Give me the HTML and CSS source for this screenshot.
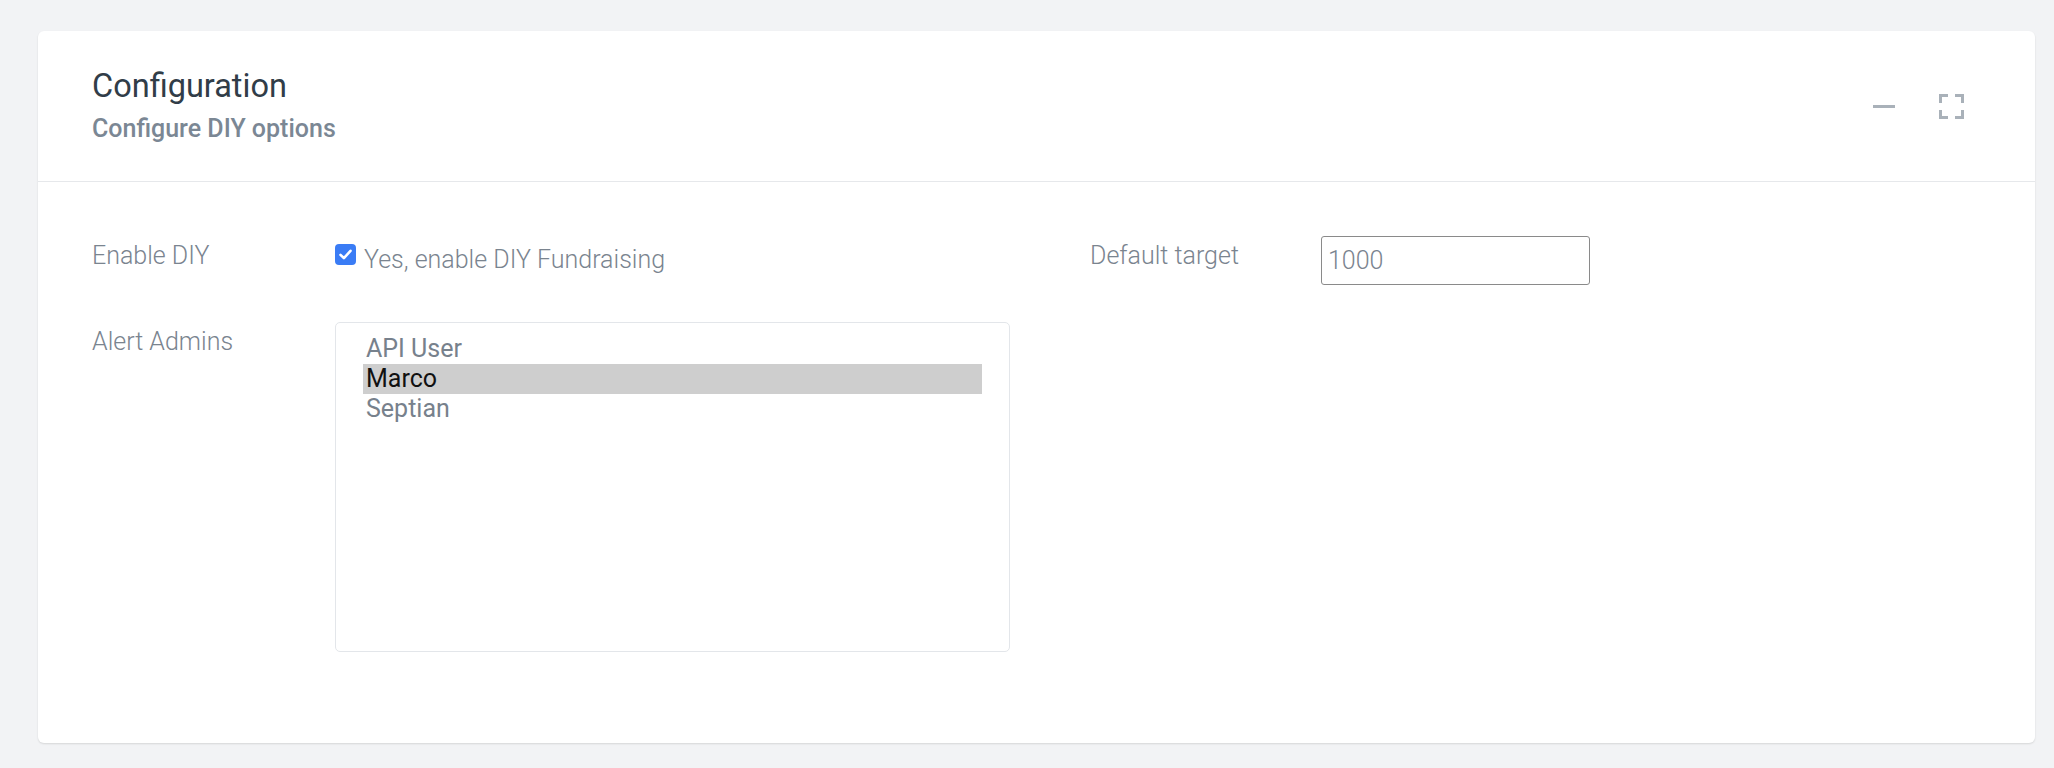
FILE: index.html
```html
<!DOCTYPE html>
<html lang="en">
<head>
<meta charset="utf-8">
<title>Configuration</title>
<link rel="stylesheet" href="styles.css">
</head>
<body>
<div class="page">
  <section class="card">
    <header class="card-header">
      <div class="heading">
        <h1 class="title">Configuration</h1>
        <p class="subtitle">Configure DIY options</p>
      </div>
      <div class="tools">
        <button class="tool" aria-label="Minimize">
          <svg width="22" height="22" viewBox="0 0 22 22"><rect x="0" y="10" width="22" height="3" fill="#a9b1b9"/></svg>
        </button>
        <button class="tool" aria-label="Fullscreen">
          <svg width="25" height="25" viewBox="0 0 25 25" fill="none" stroke="#a9b1b9" stroke-width="3"><path d="M1.5 9V1.5H9M16 1.5h7.5V9M23.5 16v7.5H16M9 23.5H1.5V16"/></svg>
        </button>
      </div>
    </header>
    <div class="card-body">
      <div class="form">
        <div class="label">Enable DIY</div>
        <label class="check-row">
          <span class="check"><svg width="21" height="21" viewBox="0 0 21 21"><path d="M5.5 10.8l3.4 3.4 6.6-7.4" fill="none" stroke="#fff" stroke-width="2.6" stroke-linecap="round" stroke-linejoin="round"/></svg></span>
          <span class="check-text">Yes, enable DIY Fundraising</span>
        </label>
        <div class="label">Default target</div>
        <div class="control"><input class="input" type="text" value="1000"></div>

        <div class="label">Alert Admins</div>
        <div class="listbox" role="listbox">
          <div class="option">API User</div>
          <div class="option selected">Marco</div>
          <div class="option">Septian</div>
        </div>
      </div>
    </div>
  </section>
</div>
</body>
</html>
```

FILE: styles.css
```css
html, body {
  margin: 0;
  background: #f2f3f5;
  font-family: Roboto, "Liberation Sans", sans-serif;
}

.page {
  padding: 31px 19px 25px 38px;
}

.card {
  background: #ffffff;
  border-radius: 6px;
  box-shadow: 0 1px 2px rgba(0, 0, 0, 0.12);
}

.card-header {
  display: flex;
  justify-content: space-between;
  align-items: center;
  height: 151px;
  box-sizing: border-box;
  padding: 0 71px 0 54px;
  border-bottom: 1px solid #e6e8eb;
}

.heading {
  align-self: flex-start;
  padding-top: 36px;
}

.title {
  margin: 0;
  font-size: 32.5px;
  line-height: 38px;
  font-weight: 400;
  color: #313d48;
}

.subtitle {
  margin: 9px 0 0;
  font-size: 25px;
  line-height: 30px;
  font-weight: 500;
  color: #7b8794;
}

.tools {
  display: flex;
  align-items: center;
  gap: 44px;
}

.tool {
  display: flex;
  padding: 0;
  border: 0;
  background: none;
}

.card-body {
  padding: 54px 55px 91px 54px;
}

.form {
  display: grid;
  grid-template-columns: 243px 755px 231px 269px;
  row-gap: 37px;
  align-items: start;
}

.label {
  padding-top: 2px;
  font-size: 25px;
  line-height: 35px;
  font-weight: 300;
  color: #7a848f;
}

.check-row {
  display: flex;
  align-items: flex-start;
  gap: 8px;
  padding-top: 6px;
}

.check {
  display: flex;
  width: 21px;
  height: 21px;
  margin-top: 2px;
  border-radius: 4px;
  background: #3a7cf5;
}

.check-text {
  font-size: 25px;
  line-height: 35px;
  font-weight: 300;
  color: #7a848f;
}

.input {
  width: 269px;
  height: 49px;
  box-sizing: border-box;
  margin: 0;
  padding: 0 6px;
  border: 1px solid #8a8a8a;
  border-radius: 3px;
  font-family: Roboto, "Liberation Sans", sans-serif;
  font-size: 25px;
  font-weight: 300;
  color: #7a848f;
  background: #fff;
}

.listbox {
  width: 675px;
  height: 330px;
  box-sizing: border-box;
  padding: 11px 27px;
  border: 1px solid #e3e6ea;
  border-radius: 5px;
}

.option {
  padding-left: 3px;
  font-size: 25px;
  line-height: 30px;
  font-weight: 400;
  color: #77818c;
}

.option.selected {
  background: #cecece;
  color: #111111;
}
```
